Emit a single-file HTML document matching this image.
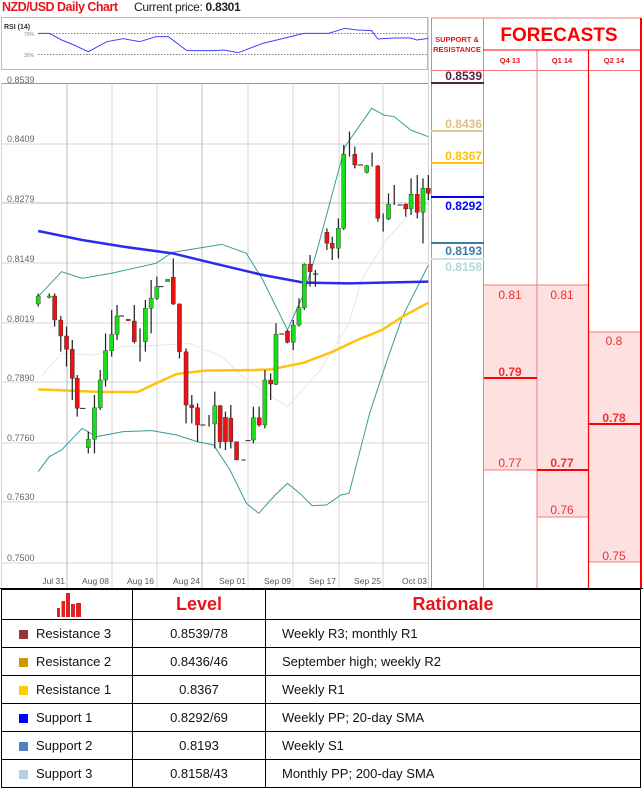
<!DOCTYPE html>
<html><head><meta charset="utf-8">
<style>
*{margin:0;padding:0;box-sizing:border-box}
body{width:643px;height:789px;background:#fff;position:relative;overflow:hidden;font-family:"Liberation Sans",sans-serif}
.a{position:absolute}
table{border-collapse:collapse;position:absolute;left:1px;top:589px;width:640px}
td{border:1px solid #000;height:28px;font-size:13px;color:#111}
.sq{display:inline-block;width:9px;height:9px;margin:0 8px 0 17px;vertical-align:-1px}
</style></head><body>
<div class="a" style="left:2px;top:0px;font-size:12.5px;font-weight:bold;color:#e8141b;letter-spacing:-0.5px">NZD/USD Daily Chart</div>
<div class="a" style="left:134px;top:0px;font-size:12px;color:#222;letter-spacing:-0.3px">Current price: <b>0.8301</b></div>

<svg class="a" style="left:0;top:0" width="643" height="789" viewBox="0 0 643 789">
<rect x="1.5" y="17.5" width="426" height="52" fill="#fff" stroke="#bbb"/>
<text x="4" y="29" font-size="7" font-weight="bold" fill="#333">RSI (14)</text>
<text x="24" y="36" font-size="5" fill="#888">70%</text>
<text x="24" y="57" font-size="5" fill="#888">30%</text>
<line x1="38" y1="33.5" x2="428" y2="33.5" stroke="#555" stroke-width="0.7" stroke-dasharray="1.5,1.5"/>
<line x1="38" y1="54.5" x2="428" y2="54.5" stroke="#555" stroke-width="0.7" stroke-dasharray="1.5,1.5"/>
<g stroke="#d4d4d4" stroke-width="1">
<line x1="1" y1="83.5" x2="428" y2="83.5" stroke="#999"/>
<line x1="1" y1="144" x2="428" y2="144"/>
<line x1="1" y1="203" x2="428" y2="203" stroke="#bbb"/>
<line x1="1" y1="263" x2="428" y2="263"/>
<line x1="1" y1="323" x2="428" y2="323"/>
<line x1="1" y1="382" x2="428" y2="382"/>
<line x1="1" y1="443" x2="428" y2="443"/>
<line x1="1" y1="502" x2="428" y2="502"/>
<line x1="1" y1="563" x2="428" y2="563"/>
<line x1="67" y1="83" x2="67" y2="588" stroke="#bbb"/>
<line x1="112" y1="83" x2="112" y2="588"/>
<line x1="157" y1="83" x2="157" y2="588"/>
<line x1="202" y1="83" x2="202" y2="588" stroke="#bbb"/>
<line x1="248" y1="83" x2="248" y2="588"/>
<line x1="293" y1="83" x2="293" y2="588"/>
<line x1="339" y1="83" x2="339" y2="588"/>
<line x1="383" y1="83" x2="383" y2="588"/>
<line x1="1.5" y1="83" x2="1.5" y2="588"/>
<line x1="428.5" y1="17" x2="428.5" y2="588"/>
</g>
<g font-size="9" fill="#666">
<text x="7" y="83">0.8539</text><text x="7" y="142">0.8409</text><text x="7" y="202">0.8279</text>
<text x="7" y="262">0.8149</text><text x="7" y="322">0.8019</text><text x="7" y="381">0.7890</text>
<text x="7" y="441">0.7760</text><text x="7" y="500">0.7630</text><text x="7" y="561">0.7500</text>
</g>
<g font-size="8.5" fill="#555" text-anchor="end">
<text x="65" y="584">Jul 31</text><text x="109" y="584">Aug 08</text><text x="154" y="584">Aug 16</text>
<text x="200" y="584">Aug 24</text><text x="246" y="584">Sep 01</text><text x="291" y="584">Sep 09</text>
<text x="336" y="584">Sep 17</text><text x="381" y="584">Sep 25</text><text x="427" y="584">Oct 03</text>
</g>
<g transform="scale(0.41068,0.33333)" fill="none">
<polyline vector-effect="non-scaling-stroke" stroke="#4040ff" stroke-width="1" points="93,100 120,100 150,120 180,135 215,155 260,125 300,116 340,125 380,110 410,110 455,152 520,152 545,150 580,158 640,130 700,112 740,100 800,100 840,85 870,90 905,92 920,117 960,114 1000,114 1015,120 1043,115"/>
<polyline vector-effect="non-scaling-stroke" stroke="#e6e6e6" stroke-width="1" points="100,1130 150,1060 230,1065 300,1040 400,1035 460,1030 540,1070 600,1140 700,1220 780,1110 850,970 880,840 940,720 1000,640 1043,610"/>
<polyline vector-effect="non-scaling-stroke" stroke="#3a9a9a" stroke-width="1" points="93,890 150,815 200,835 270,820 380,790 420,757 480,745 540,733 600,760 640,840 700,990 740,880 770,760 840,440 905,325 935,345 960,350 1000,390 1043,410"/>
<polyline vector-effect="non-scaling-stroke" stroke="#3a9a9a" stroke-width="1" points="93,1415 120,1370 150,1350 200,1285 235,1310 300,1295 370,1292 430,1305 480,1325 520,1335 560,1410 600,1510 630,1540 670,1485 700,1450 730,1480 760,1517 795,1515 830,1485 850,1480 900,1240 940,1090 980,950 1043,795"/>
<polyline vector-effect="non-scaling-stroke" stroke="#2b2bee" stroke-width="2.5" points="93,693 200,720 300,740 420,760 520,790 640,825 740,848 850,850 1043,845"/>
<polyline vector-effect="non-scaling-stroke" stroke="#ffc20e" stroke-width="2.5" points="93,1168 250,1176 335,1176 380,1150 430,1122 500,1112 620,1110 660,1108 740,1088 810,1055 870,1020 930,990 980,950 1043,908"/>
<g vector-effect="non-scaling-stroke" stroke="#222" stroke-width="3">
<path d="M93 880V920M120 880V895M133 880V980M148 948V1055M162 980V1100M176 1020V1200M188 1125V1250M215 1295V1360M230 1185V1360M244 1110V1230M257 1000V1160M272 930V1070M285 915V1020M327 915V1030M341 985V1085M354 900V1055M368 840V1000M382 830V900M422 775V915M437 910V1075M453 1045V1270M467 1185V1270M481 1210V1325M509 1245V1280M523 1175V1345M536 1215V1345M549 1235V1350M562 1215V1345M617 1220V1330M631 1220V1280M645 1110V1285M659 1120V1200M672 970V1155M700 990V1030M714 960V1050M728 895V980M741 790V930M755 765V860M768 810V860M796 685V750M809 710V780M824 655V775M837 435V690M851 395V470M864 440V505M893 495V520M906 458V500M920 495V665M933 640V695M946 580V660M960 555V615M988 610V650M1001 535V645M1016 525V655M1030 535V730M1043 525V600"/>
<path d="M195 1225H208M588 1380H598M488 1275H500M290 948H302M385 860H398M871 495H884M968 615H980M680 1002H692M762 822H775M598 1322H610"/>
</g>
<g fill="#18e018" stroke="#222" vector-effect="non-scaling-stroke" stroke-width="1">
<rect x="88" y="888" width="10" height="24"/><rect x="115" y="888" width="10" height="4"/>
<rect x="210" y="1318" width="10" height="25"/><rect x="225" y="1223" width="10" height="95"/>
<rect x="239" y="1140" width="10" height="83"/><rect x="252" y="1052" width="10" height="88"/>
<rect x="267" y="1003" width="10" height="49"/><rect x="280" y="948" width="10" height="55"/>
<rect x="349" y="925" width="10" height="100"/><rect x="363" y="895" width="10" height="30"/>
<rect x="377" y="860" width="10" height="35"/><rect x="403" y="838" width="10" height="7"/>
<rect x="518" y="1217" width="10" height="55"/><rect x="612" y="1253" width="10" height="67"/>
<rect x="640" y="1140" width="10" height="135"/><rect x="667" y="1003" width="10" height="150"/>
<rect x="709" y="975" width="10" height="52"/><rect x="723" y="923" width="10" height="52"/>
<rect x="736" y="793" width="10" height="130"/><rect x="819" y="685" width="10" height="60"/>
<rect x="832" y="463" width="10" height="222"/><rect x="888" y="497" width="10" height="20"/>
<rect x="941" y="613" width="10" height="44"/><rect x="996" y="583" width="10" height="44"/>
<rect x="1025" y="565" width="10" height="72"/>
</g>
<g fill="#ee1111" stroke="#222" vector-effect="non-scaling-stroke" stroke-width="1">
<rect x="128" y="888" width="10" height="72"/><rect x="143" y="960" width="10" height="48"/>
<rect x="157" y="1008" width="10" height="40"/><rect x="171" y="1048" width="10" height="87"/>
<rect x="183" y="1135" width="10" height="90"/><rect x="307" y="958" width="10" height="4"/>
<rect x="322" y="963" width="10" height="62"/><rect x="417" y="832" width="10" height="80"/>
<rect x="432" y="912" width="10" height="143"/><rect x="448" y="1055" width="10" height="160"/>
<rect x="462" y="1215" width="10" height="8"/><rect x="476" y="1223" width="10" height="52"/>
<rect x="531" y="1217" width="10" height="108"/><rect x="544" y="1252" width="10" height="73"/>
<rect x="557" y="1255" width="10" height="70"/><rect x="571" y="1325" width="10" height="55"/>
<rect x="626" y="1253" width="10" height="22"/><rect x="654" y="1140" width="10" height="12"/>
<rect x="695" y="993" width="10" height="34"/><rect x="750" y="793" width="10" height="22"/>
<rect x="791" y="697" width="10" height="33"/><rect x="804" y="730" width="10" height="15"/>
<rect x="859" y="463" width="10" height="32"/><rect x="915" y="498" width="10" height="157"/>
<rect x="983" y="613" width="10" height="14"/><rect x="1011" y="583" width="10" height="54"/>
<rect x="1038" y="565" width="10" height="15"/>
</g>
</g>

<rect x="484" y="285" width="53" height="185" fill="#fde0e0"/>
<rect x="537" y="285" width="51" height="232" fill="#fde0e0"/>
<rect x="588" y="332" width="52" height="230" fill="#fde0e0"/>
<g stroke="#f27c7c" stroke-width="1">
<line x1="431.5" y1="18" x2="431.5" y2="588"/>
<line x1="483.5" y1="18" x2="483.5" y2="588"/>
<line x1="537" y1="50" x2="537" y2="588"/>
<line x1="431" y1="18" x2="641" y2="18"/>
<line x1="431" y1="70.5" x2="641" y2="70.5"/>
<line x1="484" y1="285" x2="588" y2="285"/>
<line x1="484" y1="470" x2="537" y2="470"/>
<line x1="537" y1="517" x2="588" y2="517"/>
<line x1="588" y1="332" x2="640" y2="332"/>
<line x1="588" y1="562" x2="640" y2="562"/>
</g>
<g stroke="#ff0000">
<line x1="483" y1="50" x2="641" y2="50" stroke-width="1"/>
<line x1="588.5" y1="50" x2="588.5" y2="588" stroke-width="1.2"/>
<line x1="641" y1="18" x2="641" y2="588" stroke-width="2"/>
<line x1="484" y1="378" x2="537" y2="378" stroke-width="2"/>
<line x1="537" y1="470" x2="588" y2="470" stroke-width="2"/>
<line x1="588" y1="424" x2="640" y2="424" stroke-width="2"/>
</g>
<text x="559" y="41" font-size="19" font-weight="bold" fill="#ff0000" text-anchor="middle">FORECASTS</text>
<g font-size="7.5" font-weight="bold" fill="#e8141b" text-anchor="middle">
<text x="457" y="42">SUPPORT &amp;</text><text x="457" y="52">RESISTANCE</text>
<text x="510" y="63">Q4 13</text><text x="562" y="63">Q1 14</text><text x="614" y="63">Q2 14</text>
</g>
<g font-size="12" text-anchor="middle" fill="#f03030">
<text x="510" y="299">0.81</text><text x="562" y="299">0.81</text><text x="614" y="345">0.8</text>
<text x="510" y="376" font-weight="bold">0.79</text><text x="614" y="422" font-weight="bold">0.78</text>
<text x="510" y="467">0.77</text><text x="562" y="467" font-weight="bold">0.77</text>
<text x="562" y="514">0.76</text><text x="614" y="560">0.75</text>
</g>
<g stroke-width="2">
<line x1="431" y1="83" x2="484" y2="83" stroke="#5a2040"/>
<line x1="431" y1="131" x2="484" y2="131" stroke="#e6c38c"/>
<line x1="431" y1="163" x2="484" y2="163" stroke="#ffc000"/>
<line x1="431" y1="197" x2="484" y2="197" stroke="#0000ff"/>
<line x1="431" y1="243" x2="484" y2="243" stroke="#3a7ca5"/>
<line x1="431" y1="259" x2="484" y2="259" stroke="#c8e4e4"/>
</g>
<g font-size="12" font-weight="bold" text-anchor="end">
<text x="482" y="80" fill="#5a2040">0.8539</text>
<text x="482" y="128" fill="#e0bc84">0.8436</text>
<text x="482" y="160" fill="#ffc000">0.8367</text>
<text x="482" y="210" fill="#0000ff">0.8292</text>
<text x="482" y="255" fill="#3a7ca5">0.8193</text>
<text x="482" y="271" fill="#b0d8d8">0.8158</text>
</g>
<line x1="0" y1="588.5" x2="643" y2="588.5" stroke="#000"/>
</svg>

<table>
<tr style="height:30px"><td style="width:131px;position:relative">
<svg width="30" height="26" style="position:absolute;left:53px;top:2px"><g fill="#dd2222"><rect x="2" y="16" width="3" height="9"/><rect x="6.5" y="9" width="3.5" height="16"/><rect x="11" y="1" width="4" height="24"/><rect x="16" y="12" width="4" height="13"/><rect x="21" y="11" width="5" height="14"/></g></svg></td>
<td style="width:133px;text-align:center;font-size:18px;font-weight:bold;color:#e8141b">Level</td>
<td style="text-align:center;font-size:18px;font-weight:bold;color:#e8141b">Rationale</td></tr>
<tr><td><span class="sq" style="background:#953735"></span>Resistance 3</td><td style="text-align:center">0.8539/78</td><td style="padding-left:16px">Weekly R3; monthly R1</td></tr>
<tr><td><span class="sq" style="background:#cc9900"></span>Resistance 2</td><td style="text-align:center">0.8436/46</td><td style="padding-left:16px">September high; weekly R2</td></tr>
<tr><td><span class="sq" style="background:#ffcc00"></span>Resistance 1</td><td style="text-align:center">0.8367</td><td style="padding-left:16px">Weekly R1</td></tr>
<tr><td><span class="sq" style="background:#0000ff"></span>Support 1</td><td style="text-align:center">0.8292/69</td><td style="padding-left:16px">Weekly PP; 20-day SMA</td></tr>
<tr><td><span class="sq" style="background:#4f81bd"></span>Support 2</td><td style="text-align:center">0.8193</td><td style="padding-left:16px">Weekly S1</td></tr>
<tr><td><span class="sq" style="background:#b8cce4"></span>Support 3</td><td style="text-align:center">0.8158/43</td><td style="padding-left:16px">Monthly PP; 200-day SMA</td></tr>
</table>
</body></html>
